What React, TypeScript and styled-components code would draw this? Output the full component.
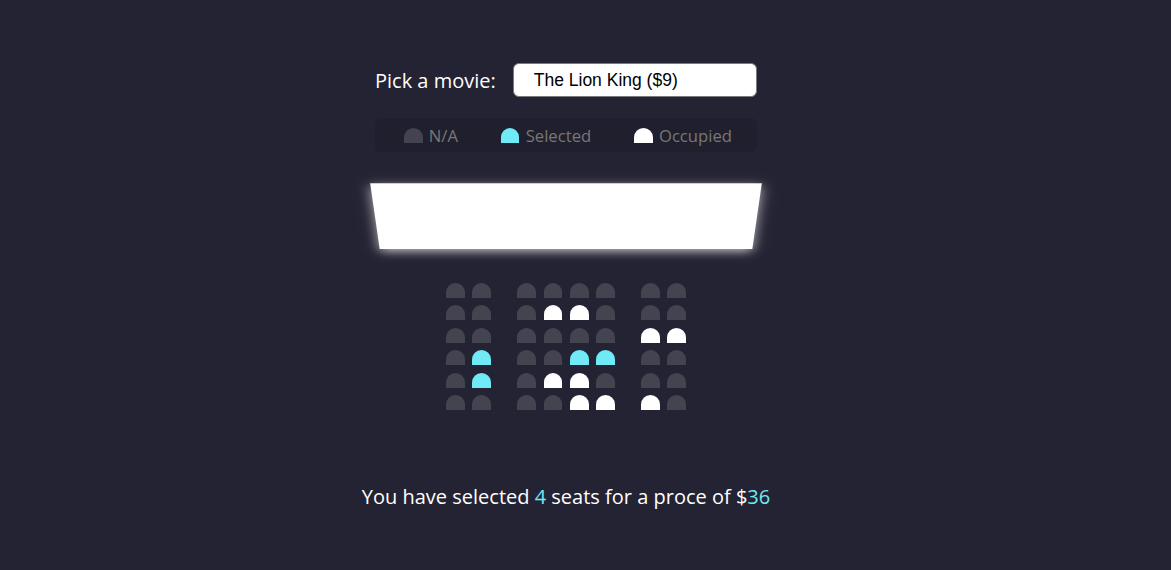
import React from "react";
import styled, { createGlobalStyle } from "styled-components";

const Global = createGlobalStyle`
  html, body { margin: 0; padding: 0; }
  body {
    background-color: #242333;
    color: #fff;
    font-family: "Open Sans", "Noto Sans", sans-serif;
  }
`;

const Page = styled.div`
  min-height: 570px;
  box-sizing: border-box;
  display: flex;
  flex-direction: column;
  align-items: center;
  padding: 63px 39px 0 0;
`;

const MovieRow = styled.div`
  display: flex;
  align-items: center;
  gap: 17px;
  width: 382px;
`;

const Label = styled.label`
  font-size: 20px;
  line-height: 27px;
`;

const Select = styled.select`
  appearance: none;
  -webkit-appearance: none;
  box-sizing: border-box;
  width: 244px;
  height: 34px;
  background-color: #fff;
  color: #000;
  border: 1px solid #7a7a7a;
  border-radius: 6px;
  font-family: "Liberation Sans", Arial, sans-serif;
  font-size: 17.5px;
  padding: 0 18px 0 20px;
  outline: none;
`;

const Showcase = styled.ul`
  box-sizing: border-box;
  width: 382px;
  height: 34px;
  margin: 21px 0 0;
  padding: 0 12.5px;
  list-style: none;
  display: flex;
  justify-content: space-between;
  align-items: center;
  background: rgba(0, 0, 0, 0.1);
  border-radius: 6px;
  color: #777;
`;

const LegendItem = styled.li`
  display: flex;
  align-items: center;
  margin: 0 12.5px;
`;

const LegendText = styled.small`
  font-size: 16.67px;
  margin-left: 2.5px;
`;

type Kind = "na" | "selected" | "occupied";

const Seat = styled.div<{ $kind?: Kind }>`
  width: 18.75px;
  height: 15px;
  margin: 3.75px;
  border-top-left-radius: 12.5px;
  border-top-right-radius: 12.5px;
  background-color: ${(p) =>
    p.$kind === "selected" ? "#6feaf6" : p.$kind === "occupied" ? "#fff" : "#444451"};
`;

const Theater = styled.div`
  width: 382px;
  margin-top: 2px;
  perspective: 1250px;
`;

const Screen = styled.div`
  background-color: #fff;
  height: 87.5px;
  width: 100%;
  margin: 18.75px 0;
  transform: rotateX(-45deg);
  box-shadow: 0 3.75px 12.5px rgba(255, 255, 255, 0.7);
`;

const Row = styled.div`
  display: flex;
  justify-content: center;
  & > ${Seat}:nth-of-type(2) { margin-right: 22.5px; }
  & > ${Seat}:nth-last-of-type(2) { margin-left: 22.5px; }
`;

const Summary = styled.p`
  margin: 69px 0 0;
  font-size: 20px;
  line-height: 27px;
`;

const Accent = styled.span`
  color: #6feaf6;
`;

const layout: Kind[][] = [
  ["na", "na", "na", "na", "na", "na", "na", "na"],
  ["na", "na", "na", "occupied", "occupied", "na", "na", "na"],
  ["na", "na", "na", "na", "na", "na", "occupied", "occupied"],
  ["na", "selected", "na", "na", "selected", "selected", "na", "na"],
  ["na", "selected", "na", "occupied", "occupied", "na", "na", "na"],
  ["na", "na", "na", "na", "occupied", "occupied", "occupied", "na"],
];

export default function App() {
  return (
    <>
      <Global />
      <Page>
        <MovieRow>
          <Label htmlFor="movie">Pick a movie:</Label>
          <Select id="movie" defaultValue="10">
            <option value="10">The Lion King ($9)</option>
            <option value="12">Avengers: Endgame ($12)</option>
            <option value="8">Joker ($8)</option>
            <option value="9">Toy Story 4 ($9)</option>
          </Select>
        </MovieRow>
        <Showcase>
          <LegendItem>
            <Seat $kind="na" />
            <LegendText>N/A</LegendText>
          </LegendItem>
          <LegendItem>
            <Seat $kind="selected" />
            <LegendText>Selected</LegendText>
          </LegendItem>
          <LegendItem>
            <Seat $kind="occupied" />
            <LegendText>Occupied</LegendText>
          </LegendItem>
        </Showcase>
        <Theater>
          <Screen />
          {layout.map((r, i) => (
            <Row key={i}>
              {r.map((k, j) => (
                <Seat key={j} $kind={k} />
              ))}
            </Row>
          ))}
        </Theater>
        <Summary>
          You have selected <Accent>4</Accent> seats for a proce of $<Accent>36</Accent>
        </Summary>
      </Page>
    </>
  );
}
